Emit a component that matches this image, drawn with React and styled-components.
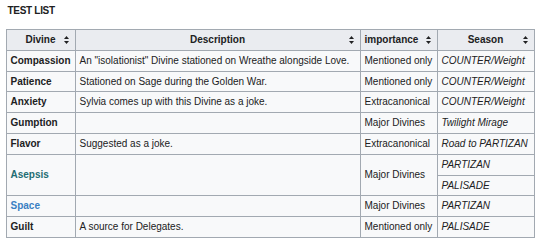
import React from 'react';
import styled, { createGlobalStyle } from 'styled-components';

const GlobalStyle = createGlobalStyle`
  html, body {
    margin: 0;
    padding: 0;
    background: #ffffff;
  }
  body {
    font-family: 'Liberation Sans', Arial, sans-serif;
    color: #202122;
  }
`;

const Page = styled.div({
  padding: '5px 7px 0 5.5px',
  width: 540,
  boxSizing: 'border-box',
});

const Title = styled.div({
  fontSize: 10,
  fontWeight: 'bold',
  letterSpacing: '-0.3px',
  lineHeight: '12px',
  height: 24,
  paddingLeft: 2,
});

const Table = styled.table({
  borderCollapse: 'collapse',
  tableLayout: 'fixed',
  width: 528,
  backgroundColor: '#f8f9fa',
  border: '1px solid #a2a9b1',
  fontSize: 10,
  lineHeight: '15.8px',
});

const HeadCell = styled.th(({ $align }) => ({
  backgroundColor: '#eaecf0',
  border: '1px solid #a2a9b1',
  padding: '2px 4px',
  fontWeight: 'bold',
  textAlign: $align || 'center',
  position: 'relative',
  whiteSpace: 'nowrap',
}));

const SortIcon = styled.span({
  position: 'absolute',
  right: 6,
  top: '50%',
  transform: 'translateY(-50%)',
  display: 'flex',
});

const Cell = styled.td(({ $bold, $italic, $color }) => ({
  border: '1px solid #a2a9b1',
  padding: '2px 4px',
  verticalAlign: 'middle',
  whiteSpace: 'nowrap',
  overflow: 'hidden',
  fontWeight: $bold ? 'bold' : 'normal',
  fontStyle: $italic ? 'italic' : 'normal',
  color: $color || '#202122',
}));

const Sort = () => (
  <SortIcon>
    <svg width="5" height="8" viewBox="0 0 5 8">
      <path d="M2.5 0 L5 3 L0 3 Z" fill="#202122" />
      <path d="M0 5 L5 5 L2.5 8 Z" fill="#202122" />
    </svg>
  </SortIcon>
);

const rows = [
  { name: 'Compassion', desc: 'An "isolationist" Divine stationed on Wreathe alongside Love.', imp: 'Mentioned only', seasons: ['COUNTER/Weight'] },
  { name: 'Patience', desc: 'Stationed on Sage during the Golden War.', imp: 'Mentioned only', seasons: ['COUNTER/Weight'] },
  { name: 'Anxiety', desc: 'Sylvia comes up with this Divine as a joke.', imp: 'Extracanonical', seasons: ['COUNTER/Weight'] },
  { name: 'Gumption', desc: '', imp: 'Major Divines', seasons: ['Twilight Mirage'] },
  { name: 'Flavor', desc: 'Suggested as a joke.', imp: 'Extracanonical', seasons: ['Road to PARTIZAN'] },
  { name: 'Asepsis', color: '#1f6d73', desc: '', imp: 'Major Divines', seasons: ['PARTIZAN', 'PALISADE'] },
  { name: 'Space', color: '#3a80c3', desc: '', imp: 'Major Divines', seasons: ['PARTIZAN'] },
  { name: 'Guilt', desc: 'A source for Delegates.', imp: 'Mentioned only', seasons: ['PALISADE'] },
];

export default function App() {
  return (
    <>
      <GlobalStyle />
      <Page>
        <Title>TEST LIST</Title>
        <Table>
          <colgroup>
            <col style={{ width: 69 }} />
            <col style={{ width: 285 }} />
            <col style={{ width: 77 }} />
            <col style={{ width: 97 }} />
          </colgroup>
          <thead>
            <tr>
              <HeadCell>Divine<Sort /></HeadCell>
              <HeadCell>Description<Sort /></HeadCell>
              <HeadCell $align="left">importance<Sort /></HeadCell>
              <HeadCell>Season<Sort /></HeadCell>
            </tr>
          </thead>
          <tbody>
            {rows.map((row) => {
              const span = row.seasons.length;
              return (
                <React.Fragment key={row.name}>
                  <tr>
                    <Cell $bold $color={row.color} rowSpan={span}>{row.name}</Cell>
                    <Cell rowSpan={span}>{row.desc}</Cell>
                    <Cell rowSpan={span}>{row.imp}</Cell>
                    <Cell $italic>{row.seasons[0]}</Cell>
                  </tr>
                  {row.seasons.slice(1).map((s) => (
                    <tr key={s}>
                      <Cell $italic>{s}</Cell>
                    </tr>
                  ))}
                </React.Fragment>
              );
            })}
          </tbody>
        </Table>
      </Page>
    </>
  );
}
